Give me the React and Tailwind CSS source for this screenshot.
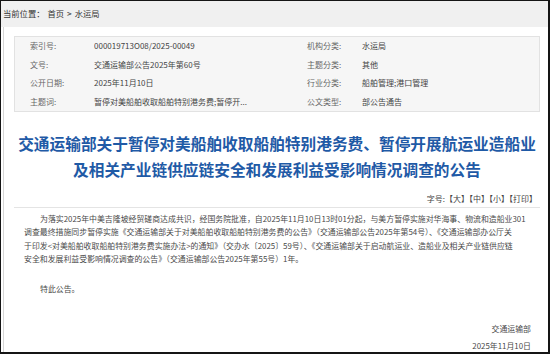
export default function App() {
  const rows = [
    ["索引号:", "000019713O08/2025-00049", "机构分类:", "水运局"],
    ["文号:", "交通运输部公告2025年第60号", "主题分类:", "其他"],
    ["公开日期:", "2025年11月10日", "行业分类:", "船舶管理;港口管理"],
    ["主题词:", "暂停对美船舶收取船舶特别港务费;暂停开...", "公文类型:", "部公告通告"],
  ];
  return (
    <div
      className="w-[550px] h-[354px] overflow-hidden bg-white border-t border-l border-r-2 border-b-2 border-[#151515] flex flex-col [font-family:'Noto_Sans_CJK_SC',sans-serif]"
    >
      <div className="h-[26px] shrink-0 bg-[#f0f0f0] pl-[2px] pt-[5px] text-[8.3px] leading-[14px] text-[#333] whitespace-nowrap flex">
        <span>当前位置：</span>
        <span className="ml-[3px]">首页</span>
        <span className="ml-[3px]">&gt;</span>
        <span className="ml-[3px]">水运局</span>
      </div>
      <div className="flex-1 ml-[2px] border-l border-[#d6d6d6] flex flex-col">
        <div className="mt-[9px] ml-[10px] mr-[8px] border border-[#e2e2e2] bg-[#f6f6f6] flex flex-col">
          {rows.map((r, i) => (
            <div key={i} className="h-[18.5px] flex items-center text-[8px] whitespace-nowrap">
              <div className="w-[15px]" />
              <div className="w-[64px] text-[#666]">{r[0]}</div>
              <div className="w-[199px] text-[#444] overflow-hidden">{r[1]}</div>
              <div className="w-[14px]" />
              <div className="w-[55px] text-[#666]">{r[2]}</div>
              <div className="text-[#444]">{r[3]}</div>
            </div>
          ))}
        </div>
        <div className="mt-[19px] ml-[10px] mr-[8px] text-center text-[15.7px] leading-[26px] font-bold text-[#1f5aa6] whitespace-nowrap">
          <div>交通运输部关于暂停对美船舶收取船舶特别港务费、暂停开展航运业造船业</div>
          <div>及相关产业链供应链安全和发展利益受影响情况调查的公告</div>
        </div>
        <div className="mt-[9px] ml-[10px] mr-[8px] h-[16px] border-b border-[#e4e4e4] flex justify-end pr-[3px] text-[8px] leading-[14px] text-[#444] whitespace-nowrap">
          字号:【大】【中】【小】【打印】
        </div>
        <div className="mt-[4px] ml-[20px] text-[7.9px] leading-[13.3px] text-[#4a4a4a] whitespace-nowrap">
          <div className="pl-[16px]">为落实2025年中美吉隆坡经贸磋商达成共识，经国务院批准，自2025年11月10日13时01分起，与美方暂停实施对华海事、物流和造船业301</div>
          <div>调查最终措施同步暂停实施《交通运输部关于对美船舶收取船舶特别港务费的公告》（交通运输部公告2025年第54号）、《交通运输部办公厅关</div>
          <div>于印发&lt;对美船舶收取船舶特别港务费实施办法&gt;的通知》（交办水〔2025〕59号）、《交通运输部关于启动航运业、造船业及相关产业链供应链</div>
          <div>安全和发展利益受影响情况调查的公告》（交通运输部公告2025年第55号）1年。</div>
          <div className="pl-[16px] mt-[17px]">特此公告。</div>
        </div>
        <div className="mt-[25px] mr-[17px] text-right text-[7.9px] leading-[17px] text-[#4a4a4a] whitespace-nowrap">
          <div>交通运输部</div>
          <div>2025年11月10日</div>
        </div>
      </div>
    </div>
  );
}
